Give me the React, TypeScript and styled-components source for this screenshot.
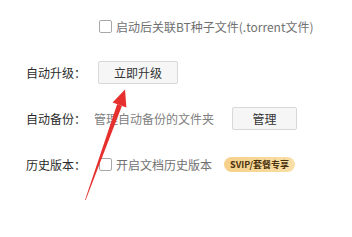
import styled, { createGlobalStyle } from "styled-components";

const GlobalStyle = createGlobalStyle`
  html, body {
    margin: 0;
    padding: 0;
    background: #fff;
  }
  body {
    font-family: "Noto Sans CJK SC", "Noto Sans", sans-serif;
  }
`;

export default function App() {
  return (
    <Page>
      <GlobalStyle />
      <SettingsList>
        {/* 启动后关联 */}
        <Row>
          <Label />
          <Check>
            <Box />
            <CheckText>启动后关联BT种子文件(.torrent文件)</CheckText>
          </Check>
        </Row>

        <Row>
          <Label>自动升级：</Label>
          <Button width={80}>立即升级</Button>
        </Row>

        <Row>
          <Label>自动备份：</Label>
          <Hint>管理自动备份的文件夹</Hint>
          <Button width={65}>管理</Button>
        </Row>

        <Row>
          <Label>历史版本：</Label>
          <Check>
            <Box />
            <CheckText>开启文档历史版本</CheckText>
          </Check>
          <Badge>SVIP/套餐专享</Badge>
        </Row>
      </SettingsList>

      {/* 红色标注箭头 */}
      <Arrow viewBox="0 0 352 237" width="352" height="237">
        <polygon
          points="85,200 85.6,200.2 121.9,105.9 117.2,104.1"
          fill="#e5302d"
        />
        <polygon points="125,89.5 112.6,102.6 126.4,107.6" fill="#e5302d" />
      </Arrow>
    </Page>
  );
}

const Page = styled.div`
  position: relative;
  width: 352px;
  height: 237px;
  overflow: hidden;
  background: #fff;
`;

const SettingsList = styled.div`
  display: flex;
  flex-direction: column;
  gap: 22px;
  padding: 14px 0 0 26px;
`;

const Row = styled.div`
  display: flex;
  align-items: center;
  height: 24px;
  font-size: 12px;
`;

const Label = styled.div`
  width: 68px;
  flex-shrink: 0;
  color: #2a2a2a;
  font-size: 12px;
`;

const Check = styled.label`
  display: flex;
  align-items: center;
  gap: 4px;
  margin-left: 5px;
`;

const Box = styled.span`
  width: 11px;
  height: 11px;
  border: 1px solid #a8a8a8;
  border-radius: 2px;
  background: #fff;
`;

const CheckText = styled.span`
  color: #707070;
  font-size: 12px;
`;

const Hint = styled.span`
  color: #808080;
  font-size: 12px;
  margin-right: 14px;
`;

const Button = styled.button<{ width: number }>`
  width: ${(p) => p.width}px;
  height: 23px;
  margin-left: 4px;
  padding: 0;
  border: 1px solid #d8d8d8;
  border-radius: 2px;
  background: #f6f6f6;
  color: #333;
  font-family: inherit;
  font-size: 12px;
  cursor: pointer;
`;

const Badge = styled.span`
  margin-left: 12px;
  display: inline-flex;
  align-items: center;
  height: 15px;
  padding: 0 6px;
  border-radius: 8px;
  background: linear-gradient(90deg, #f5d18a, #f9dea6);
  color: #4a3210;
  font-size: 9px;
  font-weight: 700;
  font-family: "Noto Sans CJK SC", "Noto Sans", sans-serif;
`;

const Arrow = styled.svg`
  position: absolute;
  left: 0;
  top: 0;
  pointer-events: none;
`;
